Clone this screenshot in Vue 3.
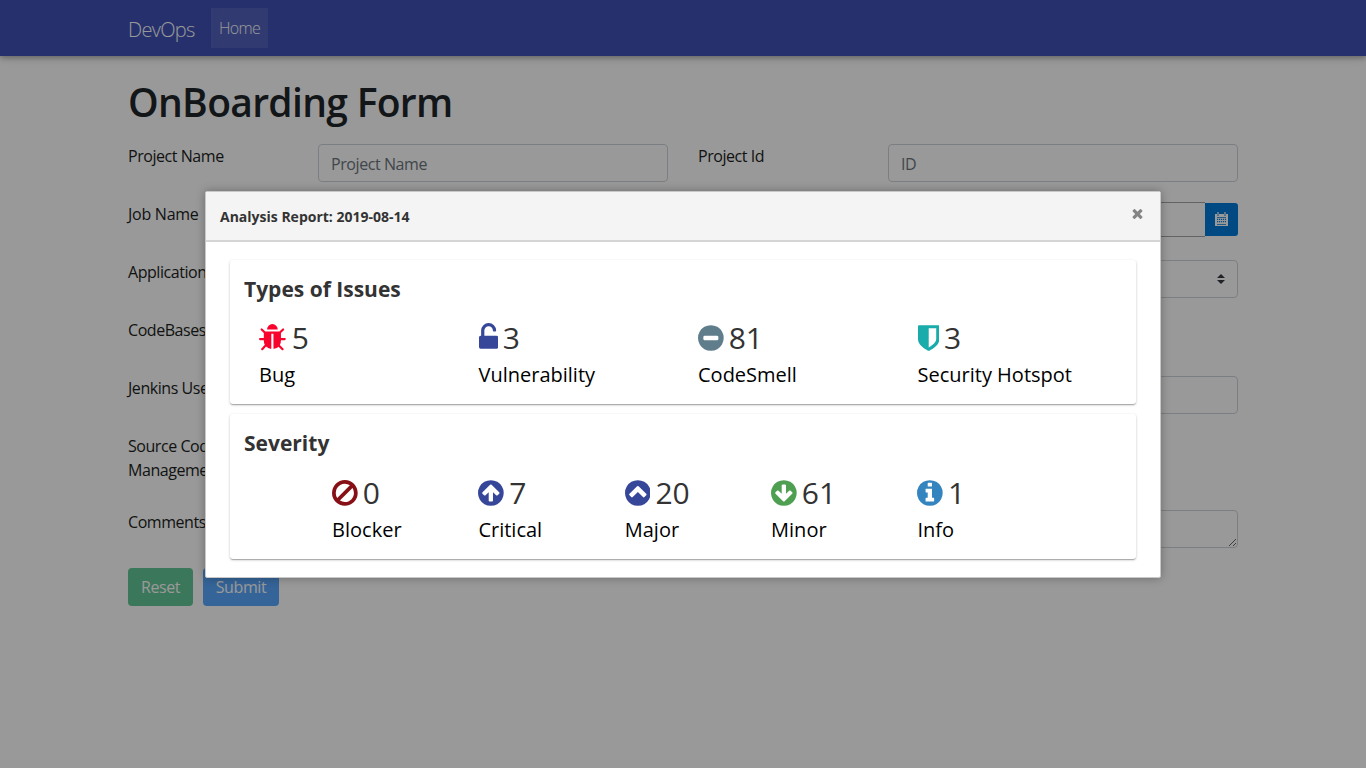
<script setup>
const disc = 'M1664 896q0 209-103 385.5t-279.5 279.5-385.5 103-385.5-103-279.5-279.5-103-385.5 103-385.5 279.5-279.5 385.5-103 385.5 103 279.5 279.5 103 385.5z'
const arrow = 'M1412 897q0-27-18-45l-91-91-362-362q-18-18-45-18t-45 18l-362 362-91 91q-18 18-18 45t18 45l91 91q18 18 45 18t45-18l189-189v502q0 26 19 45t45 19h128q26 0 45-19t19-45v-502l189 189q19 19 45 19t45-19l91-91q18-18 18-45z'
const minus = 'M1344 960v-128q0-26-19-45t-45-19h-768q-26 0-45 19t-19 45v128q0 26 19 45t45 19h768q26 0 45-19t19-45z'
const chevron = 'M1293 1139l102-102q19-19 19-45t-19-45l-454-454q-19-19-45-19t-45 19l-454 454q-19 19-19 45t19 45l102 102q19 19 45 19t45-19l307-307 307 307q19 19 45 19t45-19z'
const info = 'M1152 1376v-160q0-14-9-23t-23-9h-96v-512q0-14-9-23t-23-9h-320q-14 0-23 9t-9 23v160q0 14 9 23t23 9h96v320h-96q-14 0-23 9t-9 23v160q0 14 9 23t23 9h448q14 0 23-9t9-23zM1024 480v-160q0-14-9-23t-23-9h-192q-14 0-23 9t-9 23v160q0 14 9 23t23 9h192q14 0 23-9t9-23z'
const bug = 'M1696 960q0 26-19 45t-45 19h-224q0 171-67 290l208 209q19 19 19 45t-19 45q-18 19-45 19t-45-19l-198-197q-5 5-15 13t-42 28.5-65 36.5-82 29-97 13v-896h-128v896q-51 0-101.5-13.5t-87-33-66-39-43.5-32.5l-15-14-183 207q-20 21-48 21-24 0-43-16-19-18-20.5-44.5t15.5-46.5l202-227q-58-114-58-274h-224q-26 0-45-19t-19-45 19-45 45-19h224v-294l-173-173q-19-19-19-45t19-45 45-19 45 19l173 173h844l173-173q19-19 45-19t45 19 19 45-19 45l-173 173v294h224q26 0 45 19t19 45zm-480-576h-640q0-133 93.5-226.5t226.5-93.5 226.5 93.5 93.5 226.5z'
const unlock = 'M1376 768q40 0 68 28t28 68v576q0 40-28 68t-68 28h-960q-40 0-68-28t-28-68v-576q0-40 28-68t68-28h32v-320q0-185 131.5-316.5t316.5-131.5 316.5 131.5 131.5 316.5q0 26-19 45t-45 19h-64q-26 0-45-19t-19-45q0-106-75-181t-181-75-181 75-75 181v320h736z'
const shield = 'M1344 960v-640h-448v1137q119-63 213-137 235-184 235-360zm192-768v768q0 86-33.5 170.5t-83 150-118 127.5-126.5 103-121 77.5-89.5 49.5-42.5 20q-12 6-26 6t-26-6q-16-7-42.5-20t-89.5-49.5-121-77.5-126.5-103-118-127.5-83-150-33.5-170.5v-768q0-26 19-45t45-19h1152q26 0 45 19t19 45z'
const ban = 'M1440 893q0-161-87-295l-754 753q137 89 297 89 111 0 211.5-43.5t173.5-116.5 116-174.5 43-212.5zm-999 299l755-754q-135-91-300-91-148 0-273 73t-198 199-73 274q0 162 89 299zm1223-299q0 157-61 300t-163.5 246-245 164-298.5 61-298.5-61-245-164-163.5-246-61-300 61-299.5 163.5-245.5 245-164 298.5-61 298.5 61 245 164 163.5 245.5 61 299.5z'

const types = [
  { label: 'Bug', value: 5, path: bug, color: '#f8032e', x: 96, w: 1664 },
  { label: 'Vulnerability', value: 3, path: unlock, color: '#364699', x: 320, w: 1152 },
  { label: 'CodeSmell', value: 81, path: disc, mark: minus, color: '#607d8b', x: 128, w: 1536 },
  { label: 'Security Hotspot', value: 3, path: shield, color: '#1aabab', x: 256, w: 1280 },
]
const severities = [
  { label: 'Blocker', value: 0, path: ban, color: '#861015', x: 128, w: 1536 },
  { label: 'Critical', value: 7, path: disc, mark: arrow, color: '#364699', x: 128, w: 1536 },
  { label: 'Major', value: 20, path: disc, mark: chevron, color: '#364699', x: 128, w: 1536 },
  { label: 'Minor', value: 61, path: disc, mark: arrow, flip: true, color: '#4f9f52', x: 128, w: 1536 },
  { label: 'Info', value: 1, path: disc, mark: info, color: '#3484bf', x: 128, w: 1536 },
]
const groups = [
  { title: 'Types of Issues', items: types, cls: 'four' },
  { title: 'Severity', items: severities, cls: 'five' },
]
const px = (u) => (u * 30) / 1792
</script>

<template>
  <div class="page">
    <nav class="navbar">
      <span class="brand">DevOps</span>
      <a class="nav-link">Home</a>
    </nav>

    <main class="container">
      <h1>OnBoarding Form</h1>
      <form>
        <div class="row">
          <label>Project Name</label>
          <div class="field"><input placeholder="Project Name" /></div>
          <label>Project Id</label>
          <div class="field"><input placeholder="ID" /></div>
        </div>
        <div class="row">
          <label class="job">Job Name</label>
          <div class="field date">
            <input />
            <button type="button" class="cal">
              <svg width="13" height="14" viewBox="0 0 13 14"><path fill-rule="evenodd" d="M0 2h2v1.5h2V2h5v1.5h2V2h2v12H0zM2 5.2h9v.7H2zM2 12.2h9v.7H2zM2 6.8h1.2v1.2H2zM4 6.8h1.2v1.2H4zM6 6.8h1.2v1.2H6zM8 6.8h1.2v1.2H8zM10 6.8h1v1.2h-1zM2 9h1.2v1.2H2zM4 9h1.2v1.2H4zM6 9h1.2v1.2H6zM8 9h1.2v1.2H8zM10 9h1v1.2h-1z" /><path d="M2.4 0h1.2v3H2.4zM9.4 0h1.2v3H9.4z" /></svg>
            </button>
          </div>
        </div>
        <div class="row">
          <label>Application</label>
          <div class="field">
            <div class="select">
              <svg width="8" height="10" viewBox="0 0 4 5"><path d="M2 0L0 2h4zm0 5L0 3h4z" /></svg>
            </div>
          </div>
        </div>
        <div class="row"><label>CodeBases</label></div>
        <div class="row">
          <label>Jenkins User</label>
          <div class="field"><input /></div>
        </div>
        <div class="row"><label>Source Code Management</label></div>
        <div class="row">
          <label>Comments</label>
          <div class="field"><textarea></textarea></div>
        </div>
        <div class="actions">
          <button type="button" class="btn reset">Reset</button>
          <button type="button" class="btn submit">Submit</button>
        </div>
      </form>
    </main>

    <div class="overlay">
      <section class="dialog">
        <header>
          <span class="title">Analysis Report: 2019-08-14</span>
          <svg class="close" width="15" height="15" viewBox="0 0 1792 1792"><path d="M1490 1322q0 40-28 68l-136 136q-28 28-68 28t-68-28l-294-294-294 294q-28 28-68 28t-68-28l-136-136q-28-28-28-68t28-68l294-294-294-294q-28-28-28-68t28-68l136-136q28-28 68-28t68 28l294 294 294-294q28-28 68-28t68 28l136 136q28 28 28 68t-28 68l-294 294 294 294q28 28 28 68z" /></svg>
        </header>
        <div class="body">
          <article v-for="g in groups" :key="g.title" class="card" :class="g.cls">
            <h2>{{ g.title }}</h2>
            <div class="stats">
              <div v-for="s in g.items" :key="s.label" class="stat">
                <div class="count">
                  <svg :width="px(s.w)" height="30" :viewBox="`${s.x} 0 ${s.w} 1792`">
                    <path :d="s.path" :fill="s.color" />
                    <path v-if="s.mark" :d="s.mark" fill="#fff" :transform="s.flip ? 'translate(0 1792) scale(1 -1)' : undefined" />
                  </svg>
                  <span>{{ s.value }}</span>
                </div>
                <div class="label">{{ s.label }}</div>
              </div>
            </div>
          </article>
        </div>
      </section>
    </div>
  </div>
</template>

<style>
body { margin: 0; overflow: hidden; }
</style>

<style scoped>
* { box-sizing: border-box; }
.page {
  position: relative;
  height: 768px;
  overflow: hidden;
  background: #fff;
  color: #212529;
  font: 16px/24px "Open Sans", "Noto Sans", sans-serif;
}
.navbar {
  display: flex;
  align-items: center;
  height: 56px;
  padding: 0 128px;
  background: #3f51b5;
  color: #fff;
  box-shadow: 0 2px 5px rgba(0, 0, 0, .26), 0 2px 10px rgba(0, 0, 0, .12);
}
.brand {
  width: 67px;
  margin: 4px 16px 0 0;
  font-size: 20px;
  font-weight: 300;
  letter-spacing: -.7px;
  white-space: nowrap;
}
.nav-link {
  width: 57px;
  height: 40px;
  padding: 8px;
  background: rgba(255, 255, 255, .1);
  font-weight: 300;
  letter-spacing: -.7px;
  white-space: nowrap;
}
.container { padding: 22px 128px 0; }
h1 {
  height: 48px;
  margin: 0 0 18px;
  font-size: 39px;
  font-weight: 600;
  line-height: 48px;
  letter-spacing: -.68px;
}
.row {
  display: grid;
  grid-template-columns: 160px 350px 160px 350px;
  column-gap: 30px;
  min-height: 38px;
  margin-bottom: 20px;
}
label {
  grid-column: 1;
  margin-bottom: 8px;
  color: #1b1e21;
  letter-spacing: -.45px;
}
.job { letter-spacing: -.25px; }
label:nth-of-type(2) { grid-column: 3; }
.field { grid-column: 4; height: 38px; }
.field:nth-child(2):not(:last-child) { grid-column: 2; }
input, textarea, .select {
  display: block;
  width: 100%;
  height: 38px;
  margin: 0;
  padding: 7px 12px 5px;
  border: 1px solid #ced4da;
  border-radius: 4px;
  background: #fff;
  font: inherit;
  letter-spacing: -.42px;
}
input::placeholder { color: #6c757d; opacity: 1; }
.select { display: flex; align-items: center; justify-content: flex-end; padding: 0 12px; }
.select svg { fill: #343a40; }
.date { display: flex; align-items: flex-start; }
.date input {
  flex: 1;
  height: 35px;
  border-color: #a6a6a6;
  border-right: 0;
  border-radius: 3px 0 0 3px;
}
.cal {
  display: flex;
  align-items: center;
  justify-content: center;
  width: 33px;
  height: 33px;
  margin-top: 1px;
  padding: 0 0 1px;
  border: 0;
  border-radius: 0 3px 3px 0;
  background: #007ad9;
}
.cal svg { fill: #fff; }
.actions { display: flex; gap: 10px; }
.btn {
  width: 65px;
  height: 38px;
  padding: 0;
  border: 0;
  border-radius: 4px;
  background: #63c698;
  color: #fff;
  font: inherit;
  letter-spacing: -.4px;
}
.submit { width: 76px; background: #59a7fd; }
.overlay {
  position: absolute;
  inset: 0;
  display: flex;
  align-items: center;
  justify-content: center;
  background: rgba(0, 0, 0, .4);
}
.dialog {
  width: 956px;
  height: 387px;
  border: 1px solid #c8c8c8;
  border-radius: 2px;
  background: #fff;
  color: #333;
  box-shadow: 0 0 10px rgba(0, 0, 0, .3);
}
header {
  display: flex;
  align-items: center;
  justify-content: space-between;
  height: 50px;
  padding: 0 15px 0 14px;
  border-bottom: 2px solid #d5d5d5;
  background: #f4f4f4;
  font-size: 14px;
  font-weight: 700;
}
.title { padding-top: 2px; }
.close { margin-top: -4px; fill: #848484; }
.body { padding: 18px 24px 0; }
.card {
  height: 144px;
  margin-bottom: 10px;
  padding: 13px 14px;
  border-radius: 3px;
  box-shadow: 0 1px 3px rgba(0, 0, 0, .2), 0 1px 1px rgba(0, 0, 0, .14), 0 2px 1px -1px rgba(0, 0, 0, .12);
}
.five { height: 145px; }
h2 { margin: 0; font-size: 21px; font-weight: 700; line-height: 32px; }
.stats { display: grid; grid-template-columns: repeat(4, 1fr); margin-top: 13px; }
.five .stats { grid-template-columns: repeat(5, 146.33px); padding-left: 73.1px; margin-top: 14px; }
.stat { padding-left: 15px; }
.count { display: flex; align-items: center; gap: 5px; height: 40px; font-size: 30px; line-height: 40px; }
.label { margin-top: 2px; color: #000; font-size: 20px; line-height: 30px; white-space: nowrap; }
</style>
